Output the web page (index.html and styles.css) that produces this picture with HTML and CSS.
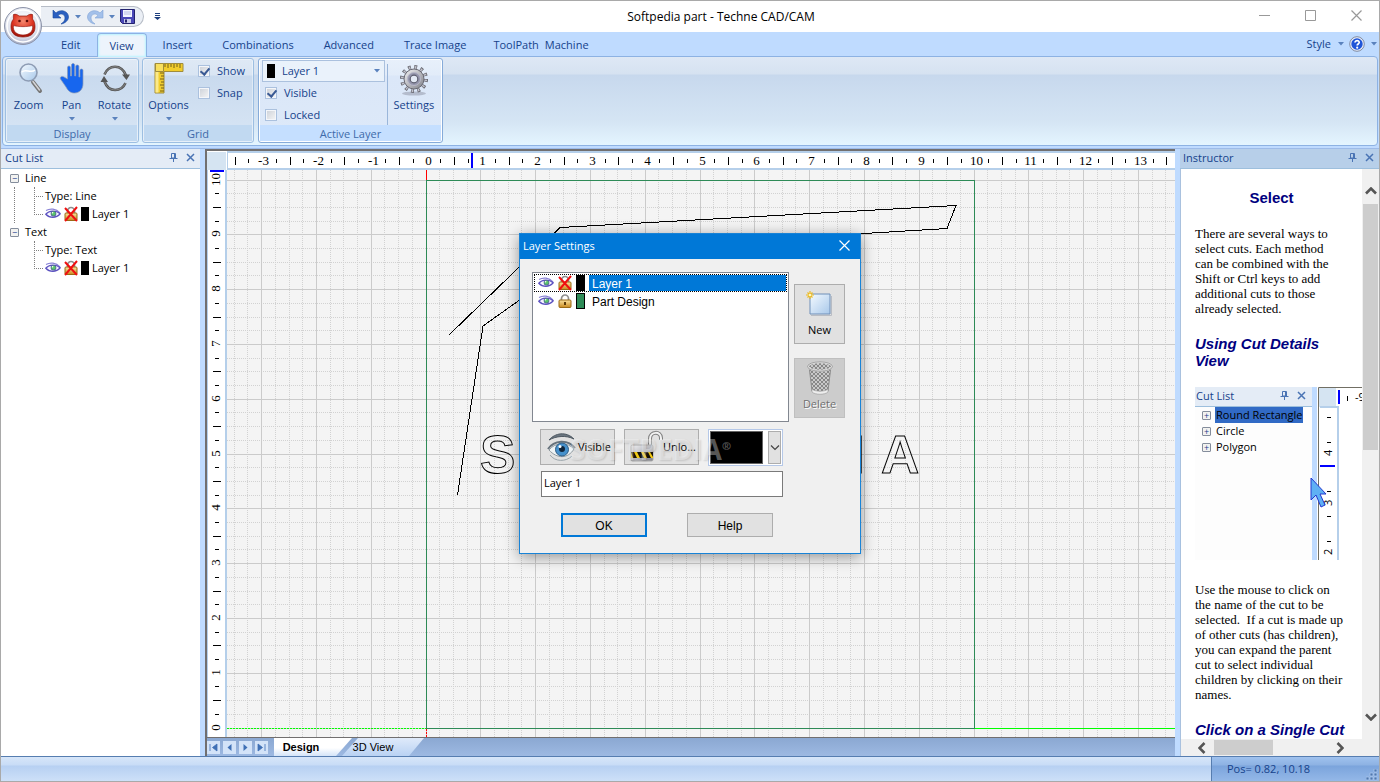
FILE: index.html
```html
<!DOCTYPE html>
<html lang="en">
<head>
    <meta charset="UTF-8">
    <meta name="viewport" content="width=device-width, initial-scale=1.0">
    <title>Softpedia part - Techne CAD/CAM</title>
    <link rel="stylesheet" href="styles.css">
</head>
<body>
    <!-- shared icons -->
    <svg class="defs" width="0" height="0" aria-hidden="true">
        <defs>
            <linearGradient id="gold" x1="0" y1="0" x2="0" y2="1">
                <stop offset="0" stop-color="#fbe3a0"/>
                <stop offset="1" stop-color="#c98a1e"/>
            </linearGradient>
            <linearGradient id="steel" x1="0" y1="0" x2="1" y2="1">
                <stop offset="0" stop-color="#f4f4f6"/>
                <stop offset="1" stop-color="#7f8088"/>
            </linearGradient>
            <linearGradient id="glass" x1="0" y1="0" x2="1" y2="1">
                <stop offset="0" stop-color="#f4faff"/>
                <stop offset="1" stop-color="#a8c8ea"/>
            </linearGradient>
            <radialGradient id="orb" cx="50%" cy="35%" r="65%">
                <stop offset="0" stop-color="#ffffff"/>
                <stop offset="0.7" stop-color="#dfe3ee"/>
                <stop offset="1" stop-color="#a4abc4"/>
            </radialGradient>
            <radialGradient id="red" cx="50%" cy="30%" r="70%">
                <stop offset="0" stop-color="#f58a70"/>
                <stop offset="0.6" stop-color="#dc3320"/>
                <stop offset="1" stop-color="#a01208"/>
            </radialGradient>
            <pattern id="mesh" width="4" height="4" patternUnits="userSpaceOnUse">
                <rect width="4" height="4" fill="#c9c9c9"/>
                <path d="M0 0l4 4M4 0l-4 4" stroke="#808080" stroke-width="0.9"/>
            </pattern>
            <symbol id="eye" viewBox="0 0 16 12">
                <path d="M1 2.500C5 .2 11 .4 15 5" fill="none" stroke="#8a83d6" stroke-width="1.200"/>
                <path d="M.8 6.200C4 2.400 11 2 15.200 5.800 11 10.600 4.500 10.200 .8 6.200z" fill="#f6f5ff" stroke="#5a50c0" stroke-width="1.300"/>
                <circle cx="8.500" cy="5.800" r="2.800" fill="#50589a"/>
                <circle cx="8.500" cy="5.600" r="2.200" fill="#59c46a"/>
                <circle cx="7.600" cy="4.800" r=".8" fill="#fff"/>
            </symbol>
            <symbol id="lock" viewBox="0 0 14 14">
                <path d="M3.500 7V4.500a3.500 3.500 0 0 1 7 0V7" fill="none" stroke="#8f8f8f" stroke-width="1.700"/>
                <rect x="1" y="6" width="12" height="7.500" rx="1" fill="url(#gold)" stroke="#9a6a16"/>
                <path d="M6 8h2v3h-2z" fill="#5a3a08"/>
            </symbol>
            <symbol id="unlock" viewBox="0 0 14 16">
                <path d="M3.500 7V5a3.500 3.500 0 0 1 7 0V7" fill="none" stroke="#8f8f8f" stroke-width="1.700"/>
                <rect x="1" y="7" width="12" height="7.500" rx="1" fill="url(#gold)" stroke="#9a6a16"/>
                <path d="M1 2l12 13M13 1L1 15" stroke="#f01010" stroke-width="2"/>
            </symbol>
            <symbol id="pin" viewBox="0 0 9 9">
                <path d="M2.500 .5h4v4.500h-4zM5.500 .5v4.500M.5 5.500h8M4.500 5.500V9" fill="none" stroke="#4a74b4"/>
            </symbol>
            <symbol id="cross" viewBox="0 0 9 9">
                <path d="M1 1l7 7M8 1L1 8" stroke="#4a74b4" stroke-width="1.500"/>
            </symbol>
            <symbol id="down" viewBox="0 0 6 4">
                <path d="M0 0h6L3 3.500z" fill="#5a82bd"/>
            </symbol>
            <symbol id="chevron" viewBox="0 0 12 8">
                <path d="M1 6.500L6 1.500l5 5" fill="none" stroke="#555" stroke-width="2.600"/>
            </symbol>
        </defs>
    </svg>

    <header class="titlebar">
        <div class="quick-bar">
            <button class="quick" aria-label="Undo">
                <svg width="18" height="16" viewBox="0 0 18 16"><path d="M1 1v8h8L6 6.500c3-3 7-1 7 2.500 0 3-2 4.500-4 6 4-.6 7.500-3.500 7.500-7C16.500 2 8.500-.5 4 4z" fill="#2a5fc0" stroke="#194a9e" stroke-width=".6"/></svg>
            </button>
            <svg class="down" width="6" height="4"><use href="#down"/></svg>
            <button class="quick" aria-label="Redo">
                <svg width="18" height="16" viewBox="0 0 18 16"><path d="M17 1v8H9l3-2.500c-3-3-7-1-7 2.500 0 3 2 4.500 4 6-4-.6-7.500-3.500-7.500-7C1.500 2 9.500-.5 14 4z" fill="#a3c0ea" stroke="#7fa3d6" stroke-width=".6"/></svg>
            </button>
            <svg class="down" width="6" height="4"><use href="#down"/></svg>
            <button class="quick" aria-label="Save">
                <svg width="15" height="15" viewBox="0 0 15 15"><path d="M.5 .5h14v14H2.500l-2-2z" fill="#4a48b8" stroke="#24226e"/><path d="M3 1h9v7H3z" fill="#f3f5ff"/><path d="M4 3h7M4 5h7" stroke="#b5bce4"/><path d="M4 10h7v4H4z" fill="#c9cdea"/><path d="M5 10.500h2v3H5z" fill="#24226e"/></svg>
            </button>
        </div>
        <button class="quick" aria-label="Customize">
            <svg width="7" height="7" viewBox="0 0 7 7"><path d="M1 0h5v1H1zM1 2h5v1H1zM0 4h7L3.500 7z" fill="#1e3f7e"/></svg>
        </button>
        <h1 class="title">Softpedia part - Techne CAD/CAM</h1>
        <div class="window-buttons">
            <button aria-label="Minimize"><svg width="11" height="11"><path d="M0 5.500h11" stroke="#999"/></svg></button>
            <button aria-label="Maximize"><svg width="11" height="11"><path d="M.5 .5h10v10H.5z" fill="none" stroke="#999"/></svg></button>
            <button aria-label="Close"><svg width="11" height="11"><path d="M.5 .5l10 10M10.500 .5l-10 10" stroke="#999" stroke-width="1.200"/></svg></button>
        </div>
        <button class="orb" aria-label="Application menu">
            <svg width="40" height="40" viewBox="0 0 40 40">
                <circle cx="20" cy="20" r="18.500" fill="url(#orb)" stroke="#8c93a8"/>
                <circle cx="20" cy="20" r="16" fill="none" stroke="#fff" stroke-width="1.500"/>
                <path d="M10.500 8.500c2-.5 4 0 5.500 1.500h8c1.500-1.500 3.500-2 5.500-1.500 0 2 .3 3 0 4.500 2 2 2.500 5 2.500 8 0 7-5 10-12 10S8 28 8 21c0-3 .5-6 2.500-8-.3-1.500 0-2.500 0-4.500z" fill="url(#red)" stroke="#8e1a10" stroke-width=".7"/>
                <path d="M10.500 19.500c4 1.500 15 1.500 19 0 1 6-3.500 9.500-9.500 9.500s-10.500-3.500-9.500-9.500z" fill="#fff" stroke="#8e1a10" stroke-width=".6"/>
                <circle cx="16.500" cy="15" r="1.300" fill="#5e0c06"/><circle cx="24" cy="15" r="1.300" fill="#5e0c06"/>
            </svg>
        </button>
    </header>

    <nav class="tabs">
        <button class="tab">Edit</button>
        <button class="tab active">View</button>
        <button class="tab">Insert</button>
        <button class="tab">Combinations</button>
        <button class="tab">Advanced</button>
        <button class="tab">Trace Image</button>
        <button class="tab narrow">ToolPath</button>
        <button class="tab narrow">Machine</button>
        <div class="tabs-right">
            <button class="style-menu">Style <svg width="6" height="4"><use href="#down"/></svg></button>
            <button class="help-menu" aria-label="Help">
                <svg width="16" height="16" viewBox="0 0 16 16"><circle cx="8" cy="8" r="7.300" fill="#e8eefb" stroke="#808aa0"/><circle cx="8" cy="8" r="5.700" fill="#1f55d8"/><path d="M6 6.500C6 4 10.300 4 10.200 6.500 10.100 8 8.200 8 8.200 9.500" fill="none" stroke="#fff" stroke-width="1.700"/><circle cx="8.200" cy="11.700" r="1.100" fill="#fff"/></svg>
                <svg width="6" height="4"><use href="#down"/></svg>
            </button>
        </div>
    </nav>

    <section class="ribbon">
        <div class="group">
            <div class="group-body">
                <button class="tool">
                    <svg width="32" height="32" viewBox="0 0 32 32"><path d="M20 20l7 9" stroke="#777" stroke-width="4" stroke-linecap="round"/><path d="M20 19.500l6.500 8.500" stroke="#d5d5d8" stroke-width="1.500" stroke-linecap="round"/><circle cx="15.500" cy="10.500" r="8.500" fill="url(#glass)" stroke="#8d9cb4" stroke-width="1.600"/><path d="M9 10c3-4 9 2 13-2" fill="none" stroke="#fff" stroke-width="1.500"/></svg>
                    <span>Zoom</span>
                </button>
                <button class="tool">
                    <svg width="32" height="32" viewBox="0 0 32 32"><path d="M11.500 17V5.500c0-2 3-2 3 0V14h1V3c0-2 3.200-2 3.200 0v11h1V4.500c0-2 3.200-2 3.200 0V15h1V8.500c0-2 3.100-2 3.100 0V22c0 5-3.500 9-8.500 9-4.500 0-6.500-2.500-8.500-6l-5.500-8c-1-2 1.500-3.500 3.500-2z" fill="#1766ee" stroke="#8c9bb5" stroke-width=".7"/></svg>
                    <span>Pan</span>
                    <svg width="6" height="4"><use href="#down"/></svg>
                </button>
                <button class="tool">
                    <svg width="32" height="32" viewBox="0 0 32 32"><path d="M5.500 12.500c4-10 17-11 21.500 1M26.500 21c-4 9-17 10-21-1.500" fill="none" stroke="#555" stroke-width="2.600"/><path d="M5.500 12.500c4-10 17-11 21.500 1M26.500 21c-4 9-17 10-21-1.500" fill="none" stroke="#aaa" stroke-width=".6"/><path d="M23 12.500h8l-3.500 5.500zM1.500 20h7.500l-4-6z" fill="#555"/></svg>
                    <span>Rotate</span>
                    <svg width="6" height="4"><use href="#down"/></svg>
                </button>
            </div>
            <div class="caption">Display</div>
        </div>
        <div class="group">
            <div class="group-body">
                <button class="tool wide">
                    <svg width="32" height="32" viewBox="0 0 32 32"><path d="M2 1.500h28v8H11V31H2z" fill="#f2cd2c" stroke="#a08c3c"/><path d="M2.500 10v20.500h3V10z" fill="#fbe98a"/><path d="M12 2v3M15 2v4M18 2v3M21 2v4M24 2v3M27 2v4M7 11h4M8 14h3M7 17h4M8 20h3M7 23h4M8 26h3M7 29h4" stroke="#75601a"/><path d="M2.500 1.500h8v8h-8z" fill="#f8df5e" stroke="#a08c3c"/></svg>
                    <span>Options</span>
                    <svg width="6" height="4"><use href="#down"/></svg>
                </button>
                <div class="checks">
                    <label class="check"><input type="checkbox" checked>Show</label>
                    <label class="check"><input type="checkbox">Snap</label>
                </div>
            </div>
            <div class="caption">Grid</div>
        </div>
        <div class="group hot">
            <div class="group-body">
                <div class="layer-box">
                    <div class="combo">
                        <span class="swatch"></span>
                        <select aria-label="Active layer"><option>Layer 1</option><option>Part Design</option></select>
                        <svg width="6" height="4"><use href="#down"/></svg>
                    </div>
                    <label class="check"><input type="checkbox" checked>Visible</label>
                    <label class="check"><input type="checkbox">Locked</label>
                </div>
                <button class="tool settings">
                    <svg width="32" height="32" viewBox="0 0 32 32"><ellipse cx="16" cy="29.500" rx="12" ry="2" fill="#b4bccd"/><circle cx="16" cy="15" r="12" fill="none" stroke="#66666e" stroke-width="4" stroke-dasharray="2.800 3.480"/><circle cx="16" cy="15" r="11.700" fill="none" stroke="#c4c4ce" stroke-width="2.800" stroke-dasharray="1.400 4.726" stroke-dashoffset="-.7"/><circle cx="16" cy="15" r="10" fill="url(#steel)" stroke="#686872"/><circle cx="16" cy="15" r="6.500" fill="#9495ac" stroke="#b8b8c8"/><circle cx="16" cy="15" r="3.800" fill="#e4eaf5" stroke="#5e5f70" stroke-width="1.200"/></svg>
                    <span>Settings</span>
                </button>
            </div>
            <div class="caption">Active Layer</div>
        </div>
    </section>

    <main class="workspace">
        <aside class="panel cut-list">
            <div class="panel-head">
                <h2>Cut List</h2>
                <button aria-label="Pin"><svg width="9" height="9"><use href="#pin"/></svg></button>
                <button aria-label="Close"><svg width="9" height="9"><use href="#cross"/></svg></button>
            </div>
            <ul class="tree">
                <li>
                    <div class="node"><span class="toggle">−</span>Line</div>
                    <ul>
                        <li>Type: Line</li>
                        <li><svg width="16" height="12"><use href="#eye"/></svg><svg width="14" height="16"><use href="#unlock"/></svg><span class="swatch"></span>Layer 1</li>
                    </ul>
                </li>
                <li>
                    <div class="node"><span class="toggle">−</span>Text</div>
                    <ul>
                        <li>Type: Text</li>
                        <li><svg width="16" height="12"><use href="#eye"/></svg><svg width="14" height="16"><use href="#unlock"/></svg><span class="swatch"></span>Layer 1</li>
                    </ul>
                </li>
            </ul>
        </aside>

        <section class="editor">
            <div class="sheet">
                <div class="corner"></div>
                <svg class="ruler-top" id="rulerTop"></svg>
                <svg class="ruler-left" id="rulerLeft"></svg>
                <svg class="drawing" id="drawing">
                    <g id="grid"></g>
                    <path class="axis-x dotted" d="M0 558.500H199"/>
                    <path class="axis-x" d="M748 558.500H3000"/>
                    <path class="axis-y" d="M199.500 0V10"/>
                    <path class="axis-y dotted" d="M199.500 559V3000"/>
                    <rect class="part" x="199.500" y="10.500" width="548" height="548"/>
                    <polyline class="cut" points="222,165 333,57.500 729,35.500 720,58.500 363,80 256,156 230.500,325"/>
                    <text class="cut-text" y="303" x="253 308 363 408 453 505 560 623 654">SOFTPEDIA</text>
                </svg>
            </div>
            <div class="sheet-tabs">
                <button class="nav" aria-label="First"><svg width="9" height="9"><path d="M1 1v7M8 1v7L3.500 4.500z" stroke="#3f70b5" fill="#3f70b5" stroke-width=".8"/></svg></button>
                <button class="nav" aria-label="Previous"><svg width="9" height="9"><path d="M6.500 1v7L2.500 4.500z" fill="#3f70b5"/></svg></button>
                <button class="nav" aria-label="Next"><svg width="9" height="9"><path d="M2.500 1v7l4-3.500z" fill="#3f70b5"/></svg></button>
                <button class="nav" aria-label="Last"><svg width="9" height="9"><path d="M8 1v7M1 1v7l4.500-3.500z" stroke="#3f70b5" fill="#3f70b5" stroke-width=".8"/></svg></button>
                <button class="sheet-tab current">Design</button>
                <button class="sheet-tab">3D View</button>
            </div>
        </section>

        <aside class="panel instructor">
            <div class="panel-head">
                <h2>Instructor</h2>
                <button aria-label="Pin"><svg width="9" height="9"><use href="#pin"/></svg></button>
                <button aria-label="Close"><svg width="9" height="9"><use href="#cross"/></svg></button>
            </div>
            <div class="browser">
                <article class="lesson">
                    <h3 class="center">Select</h3>
                    <p>There are several ways to<br>select cuts. Each method<br>can be combined with the<br>Shift or Ctrl keys to add<br>additional cuts to those<br>already selected.</p>
                    <h3>Using Cut Details<br>View</h3>
                    <div class="figure">
                        <div class="fig-list">
                            <div class="fig-head">Cut List
                                <svg width="9" height="9"><use href="#pin"/></svg>
                                <svg width="9" height="9"><use href="#cross"/></svg>
                            </div>
                            <ul>
                                <li><span class="toggle">+</span><span class="picked">Round Rectangle</span></li>
                                <li><span class="toggle">+</span><span>Circle</span></li>
                                <li><span class="toggle">+</span><span>Polygon</span></li>
                            </ul>
                        </div>
                        <svg class="fig-ruler" width="51" height="173" viewBox="0 0 51 173">
                            <rect width="5" height="173" fill="#bfdbff"/>
                            <path d="M6.500 173V.5H51" fill="none" stroke="#716f64"/>
                            <path d="M7 1h17v19H7z" fill="#d5e4f2"/>
                            <path d="M8 20h18v153" fill="none" stroke="#b5cfea" stroke-width="2"/>
                            <path d="M27 3v14M8 79h15" stroke="#00f" stroke-width="2"/>
                            <path d="M35.500 9v5M15 30.500h4M15 55.500h4M15 104.500h4M15 129.500h4M15 154.500h4" stroke="#000"/>
                            <text x="43" y="14">-9</text>
                            <text transform="translate(20 69) rotate(-90)">4</text>
                            <text transform="translate(20 119) rotate(-90)">3</text>
                            <text transform="translate(20 168) rotate(-90)">2</text>
                        </svg>
                        <svg class="cursor" width="17" height="32" viewBox="0 0 17 32"><path d="M1 1v22l5-5 5 12 4-2-5-11h6z" fill="#5fb0f4" stroke="#2438d0"/></svg>
                    </div>
                    <p>Use the mouse to click on<br>the name of the cut to be<br>selected.&nbsp; If a cut is made up<br>of other cuts (has children),<br>you can expand the parent<br>cut to select individual<br>children by clicking on their<br>names.</p>
                    <h3>Click on a Single Cut</h3>
                </article>
                <div class="scroll-v">
                    <svg width="12" height="8"><use href="#chevron"/></svg>
                    <span class="thumb"></span>
                    <svg class="flip" width="12" height="8"><use href="#chevron"/></svg>
                </div>
                <div class="scroll-h">
                    <svg class="left" width="12" height="8"><use href="#chevron"/></svg>
                    <span class="thumb"></span>
                    <svg class="right" width="12" height="8"><use href="#chevron"/></svg>
                </div>
            </div>
        </aside>
    </main>

    <footer class="status">
        <div class="pos">Pos= 0.82, 10.18</div>
        <svg class="grip" width="12" height="12"><path d="M8 0h3v3H8zM4 4h3v3H4zM8 4h3v3H8zM0 8h3v3H0zM4 8h3v3H4zM8 8h3v3H8z" fill="#4f78b0" stroke="#a8c4ea" stroke-width=".8"/></svg>
    </footer>

    <div class="dialog" role="dialog" aria-labelledby="dialogTitle">
        <div class="dialog-title">
            <h2 id="dialogTitle">Layer Settings</h2>
            <button aria-label="Close"><svg width="11" height="11"><path d="M.5 .5l10 10M10.500 .5l-10 10" stroke="#fff" stroke-width="1.200"/></svg></button>
        </div>
        <div class="dialog-body">
            <ul class="layers" role="listbox" aria-label="Layers">
                <li class="selected" role="option" aria-selected="true"><svg width="16" height="12"><use href="#eye"/></svg><svg width="14" height="16"><use href="#unlock"/></svg><span class="swatch"></span><span class="name">Layer 1</span></li>
                <li role="option" aria-selected="false"><svg width="16" height="12"><use href="#eye"/></svg><svg width="14" height="14"><use href="#lock"/></svg><span class="swatch green"></span><span class="name">Part Design</span></li>
            </ul>
            <div class="side-buttons">
                <button class="btn tall">
                    <svg width="32" height="32" viewBox="0 0 32 32"><path d="M6 4h20v20H6z" fill="url(#glass)" stroke="#6f8fb8"/><path d="M7 25.500h20.500V6" fill="none" stroke="#b8bcc4"/><path d="M6 1v8M2 5h8M3.500 2.500l5 5M8.500 2.500l-5 5" stroke="#eebb20" stroke-width="1.200"/><circle cx="6" cy="5" r="1.300" fill="#fff6c0"/></svg>
                    New
                </button>
                <button class="btn tall" disabled>
                    <svg width="32" height="36" viewBox="0 0 32 36"><path d="M5 6l3 25c2 3 14 3 16 0l3-25z" fill="url(#mesh)" stroke="#8c8c8c"/><path d="M8 29c3 3 13 3 16 0v3c-3 3-13 3-16 0z" fill="#eee" stroke="#999" stroke-width=".6"/><ellipse cx="16" cy="6.500" rx="12" ry="4.200" fill="url(#mesh)" stroke="#dcdcdc" stroke-width="2"/><ellipse cx="16" cy="6.500" rx="12.500" ry="4.700" fill="none" stroke="#888" stroke-width=".7"/></svg>
                    Delete
                </button>
            </div>
            <div class="layer-edit">
                <div class="layer-flags">
                    <button class="btn flag">
                        <svg width="32" height="32" viewBox="0 0 32 32"><path d="M3 9C9 2 20 0 28 8 20 4 10 5 3 9z" fill="#6b7680" stroke="#4f5962"/><path d="M2 18C8 9 22 8 29 17" fill="none" stroke="#66727c" stroke-width="2"/><path d="M3 19C9 11 22 11 28 18 22 28 11 28 3 19z" fill="#eef3f5" stroke="#8e999f"/><circle cx="16" cy="18.500" r="6.500" fill="#4691cc" stroke="#2c5c86"/><circle cx="16" cy="18" r="3" fill="#10263c"/><circle cx="14" cy="15.500" r="1.500" fill="#fff"/><path d="M4 24c5 7 16 7 22 1" fill="none" stroke="#9ba5ab"/></svg>
                        Visible
                    </button>
                    <button class="btn flag">
                        <svg width="33" height="34" viewBox="0 0 33 34"><path d="M20 16V9c0-8 11-8 11-1v2" fill="none" stroke="#7f7f7f" stroke-width="4"/><path d="M20 16V9c0-8 11-8 11-1v2" fill="none" stroke="#f2f2f2" stroke-width="2"/><rect x="1" y="15" width="22" height="16" rx="1.500" fill="url(#steel)" stroke="#aaa"/><path d="M1 22h22v6H1z" fill="#f2c914"/><path d="M1 22h3l3 6H3zM7 22h4l3 6h-4zM14 22h4l3 6h-4zM20 22h3v5z" fill="#15120a"/></svg>
                        Unlo...
                    </button>
                    <div class="color-pick">
                        <span class="color"></span>
                        <div class="color-drop">
                            <select aria-label="Layer color"></select>
                            <svg width="10" height="6"><path d="M1 .5l4 4 4-4" fill="none" stroke="#444" stroke-width="1.200"/></svg>
                        </div>
                    </div>
                </div>
                <input class="layer-name" type="text" aria-label="Layer name" value="Layer 1">
            </div>
        </div>
        <div class="dialog-actions">
            <button class="btn primary">OK</button>
            <button class="btn">Help</button>
        </div>
        <div class="watermark" aria-hidden="true">SOFTPEDIA<sup>®</sup></div>
    </div>

    <script src="script.js"></script>
</body>
</html>
```

FILE: styles.css
```css
* {
    box-sizing: border-box;
}
body {
    margin: 0;
    height: 100vh;
    display: flex;
    flex-direction: column;
    position: relative;
    overflow: hidden;
    border: 1px solid #a9a9a9;
    background: #bfdbff;
    font-family: "Open Sans", "Noto Sans", sans-serif;
    font-size: 11px;
    line-height: 16px;
    color: #000;
}
button, select, input {
    font: inherit;
    color: inherit;
}
button {
    padding: 0;
    border: 0;
    background: none;
}
h1, h2, h3, p, ul {
    margin: 0;
    padding: 0;
    font-weight: normal;
    font-size: inherit;
    list-style: none;
}
svg {
    display: block;
    flex: none;
}
.defs {
    position: absolute;
}

/* title bar */
.titlebar {
    position: relative;
    display: flex;
    align-items: center;
    height: 31px;
    flex: none;
    padding-left: 40px;
    background: #fff;
}
.quick-bar {
    display: flex;
    align-items: center;
    gap: 5px;
    height: 21px;
    padding: 0 8px 0 11px;
    margin-right: 10px;
    border: 1px solid #b6bcc6;
    border-radius: 0 11px 11px 0;
    border-left: 0;
    background: #ebeff5;
}
.quick {
    display: flex;
}
.title {
    flex: 1;
    text-align: center;
    font-size: 12px;
    padding-left: 22px;
}
.window-buttons {
    display: flex;
    gap: 35px;
    padding-right: 17px;
    margin-bottom: 2px;
}
.orb {
    position: absolute;
    left: 2px;
    top: 5px;
}

/* ribbon tabs */
.tabs {
    display: flex;
    height: 24px;
    flex: none;
    padding: 1px 2px 0 46px;
    color: #15428b;
}
.tab {
    padding: 0 13px;
    border: 1px solid transparent;
    border-bottom: 0;
    margin-right: 2px;
}
.tab.active {
    padding: 0 12px;
    border-color: #8db2e3;
    border-radius: 4px 4px 0 0;
    background: #edf4fc;
    box-shadow: inset 0 0 2px 1px #b9f3ff;
    margin-bottom: -1px;
    z-index: 1;
}
.tab.narrow {
    padding: 0 2px;
    margin-right: 0;
}
.tab:nth-child(7) {
    margin-left: 8px;
}
.tabs-right {
    display: flex;
    align-items: center;
    gap: 5px;
    margin-left: auto;
    padding-bottom: 2px;
}
.style-menu, .help-menu {
    display: flex;
    align-items: center;
    gap: 7px;
}
.help-menu {
    gap: 6px;
}

/* ribbon */
.ribbon {
    display: flex;
    gap: 3px;
    flex: none;
    height: 90px;
    margin: 0 1px 2px 1px;
    padding: 1px 2px 2px;
    border: 1px solid #8db2e3;
    border-radius: 4px;
    background: linear-gradient(#dee8f5 0, #d6e2f1 17px, #c7d8ed 18px, #d5e5f4 65px, #e4f5ff 100%);
    color: #15428b;
}
.group {
    display: flex;
    flex-direction: column;
    border: 1px solid #9dbfe2;
    border-radius: 3px;
    background: linear-gradient(#dfe9f5 0, #d9e5f3 16px, #c9daee 17px, #d8e6f5 100%);
    box-shadow: inset 0 0 0 1px rgba(255, 255, 255, 0.4);
}
.group.hot {
    margin-left: 1px;
    background: linear-gradient(#e8f0fb 0, #e2ecf9 16px, #dbe7f8 17px, #dde9f9 100%);
    border-color: #86abd9;
    box-shadow: inset 0 0 0 1px #fff;
}
.group-body {
    display: flex;
    flex: 1;
    padding: 0 2px;
}
.group:first-child .group-body {
    padding-left: 1px;
}
.caption {
    height: 16px;
    margin: 0 1px 1px;
    line-height: 17px;
    text-align: center;
    color: #3e6aaa;
    background: #c1d9f1;
}
.hot .caption {
    background: #c5dfff;
}
.tool {
    display: flex;
    flex-direction: column;
    align-items: center;
    width: 43px;
    padding-top: 3px;
}
.tool span {
    margin: 3px 0 4px;
}
.tool.wide {
    width: 47px;
}
.checks, .layer-box {
    display: flex;
    flex-direction: column;
    gap: 6px;
}
.checks {
    padding: 4px 6px 0 6px;
}
.check {
    display: flex;
    align-items: center;
    gap: 7px;
    height: 16px;
}
.check input {
    appearance: none;
    position: relative;
    width: 12px;
    height: 12px;
    margin: 0;
    border: 1px solid #abc1de;
    background: linear-gradient(135deg, #cbd0d8, #f6f6f6);
    box-shadow: inset 0 0 0 1px #f4f6fa;
}
.check input:checked::after {
    content: "";
    position: absolute;
    left: 3px;
    top: 0;
    width: 4px;
    height: 7px;
    border: solid #3a5a94;
    border-width: 0 2px 2px 0;
    transform: rotate(40deg);
}
.layer-box {
    padding: 1px 0 0 1px;
}
.layer-box .check {
    padding-left: 3px;
}
.layer-box .combo + .check {
    margin-top: -3px;
}
.combo {
    display: flex;
    align-items: center;
    width: 123px;
    height: 22px;
    padding: 0 4px;
    border: 1px solid #abc1de;
    background: #eaf2fb;
}
.combo select {
    appearance: none;
    flex: 1;
    padding: 0 0 0 7px;
    border: 0;
    background: none;
}
.swatch {
    width: 8px;
    height: 14px;
    flex: none;
    border: 1px solid #000;
    background: #000;
}
.swatch.green {
    background: #2e8b57;
}
.tool.settings {
    width: 53px;
    margin: 5px 0 0 2px;
    padding-top: 0;
    border-left: 1px solid #9ab6da;
}
.settings span {
    margin-top: 1px;
}

/* panels */
.workspace {
    display: flex;
    flex: 1;
    min-height: 0;
    gap: 5px;
    border-top: 1px solid #9dbbe8;
}
.panel {
    display: flex;
    flex-direction: column;
    background: #fff;
    flex: none;
    width: 199px;
}
.panel-head {
    display: flex;
    align-items: center;
    gap: 8px;
    height: 20px;
    flex: none;
    padding: 0 5px 2px 4px;
    border-bottom: 1px solid #9dbfdd;
    background: #e4ecf6;
    color: #15428b;
}
.panel-head h2 {
    flex: 1;
}
.instructor .panel-head {
    padding-left: 3px;
    background: #b7cfe9;
}
.tree {
    padding-left: 9px;
}
.tree .node {
    display: flex;
    align-items: center;
    gap: 6px;
    height: 18px;
}
.tree ul {
    margin-left: 4px;
    padding-left: 19px;
    border-left: 1px dotted #808080;
}
.tree > li:last-child ul {
    border-color: transparent;
}
.tree ul li {
    position: relative;
    display: flex;
    align-items: center;
    gap: 3px;
    height: 18px;
    padding-left: 11px;
}
.tree ul li::before {
    content: "";
    position: absolute;
    left: 0;
    top: -9px;
    width: 8px;
    height: 18px;
    border: dotted #808080;
    border-width: 0 0 1px 1px;
}
.tree ul li:first-child::before {
    top: 0;
    height: 9px;
}
.toggle {
    width: 9px;
    height: 9px;
    flex: none;
    border: 1px solid #848d9c;
    border-radius: 1px;
    background: #f2f2f0;
    font-size: 9px;
    line-height: 7px;
    text-align: center;
    color: #1a3c8c;
}

/* editor */
.editor {
    display: flex;
    flex-direction: column;
    flex: 1;
    min-width: 0;
    border-left: 2px solid #716f6f;
    border-top: 2px solid #716f6f;
}
.sheet {
    display: grid;
    grid-template-columns: 20px 1fr;
    grid-template-rows: 19px 1fr;
    flex: 1;
    min-height: 0;
    background: #fff;
}
.corner {
    margin: 1px 1px 0 0;
    background: #d5e4f2;
}
.ruler-top, .ruler-left, .drawing {
    width: 100%;
    height: 100%;
}
.ruler-top {
    border: solid #b5cfea;
    border-width: 2px 0 2px 1px;
}
.ruler-left {
    border: solid #b5cfea;
    border-width: 0 2px 0 1px;
}
.ruler-top text, .ruler-left text {
    font-family: "Liberation Serif", serif;
    font-size: 13px;
    text-anchor: middle;
}
.tick {
    stroke: #000;
}
.marker {
    stroke: #00f;
    stroke-width: 2;
}
.drawing {
    background: #f4f4f4;
}
.minor {
    stroke: #d2d2d2;
    stroke-dasharray: 1 1;
}
.major {
    stroke: #cbcbcb;
}
.axis-x {
    stroke: #00ff00;
}
.axis-y {
    stroke: #ff0000;
}
.dotted {
    stroke-dasharray: 2 1;
}
.part {
    fill: none;
    stroke: #2e8b57;
}
.cut, .cut-text {
    fill: none;
    stroke: #000;
    shape-rendering: crispEdges;
}
.cut-text {
    font: bold 53px "Liberation Sans", Arial, sans-serif;
}
.sheet-tabs {
    display: flex;
    align-items: center;
    gap: 3px;
    height: 19px;
    flex: none;
    border-top: 1px solid #716f6f;
    background: linear-gradient(#8ba8d2, #9db9e2);
    font: 11px "Liberation Sans", Arial, sans-serif;
}
.nav {
    display: flex;
    align-items: center;
    justify-content: center;
    width: 13px;
    height: 13px;
    background: #d3e3f8;
}
.sheet-tab {
    height: 18px;
    width: 82px;
    padding-right: 20px;
    background: linear-gradient(#dfeafa, #b9d2f3);
    clip-path: polygon(16px 0, 100% 0, 67px 100%, 0 100%);
}
.sheet-tab.current {
    width: 78px;
    margin: 0 -13px 0 3px;
    padding-right: 24px;
    background: linear-gradient(#fff 55%, #d4e4f8);
    font-weight: bold;
    clip-path: polygon(0 0, 100% 0, 62px 100%, 0 100%);
}

/* instructor */
.browser {
    display: grid;
    grid-template-columns: minmax(0, 1fr) 17px;
    grid-template-rows: minmax(0, 1fr) 17px;
    flex: 1;
    min-height: 0;
    background: #f0f0f0;
    border-left: 1px solid #a9c1de;
}
.lesson {
    overflow: hidden;
    padding: 20px 0 0 14px;
    background: #fff;
    font: 13px/15px "Liberation Serif", "Times New Roman", serif;
}
.lesson h3 {
    margin: 19px 0 18px;
    font: italic bold 15px/17px "Liberation Sans", Arial, sans-serif;
    color: #00007f;
}
.lesson h3.center {
    margin: 0 0 20px;
    padding-right: 14px;
    text-align: center;
    font-style: normal;
}
.figure {
    position: relative;
    display: flex;
    height: 173px;
    margin-bottom: 22px;
    font: 11px/16px "Open Sans", sans-serif;
}
.fig-list {
    width: 117px;
    flex: none;
    background: #fdfdfd;
}
.fig-head {
    display: flex;
    align-items: center;
    gap: 8px;
    height: 20px;
    padding: 0 6px 2px 1px;
    border-bottom: 1px solid #9dbfdd;
    background: #e4ecf6;
    color: #15428b;
}
.fig-head svg:first-of-type {
    margin-left: auto;
}
.fig-list li {
    display: flex;
    align-items: center;
    gap: 4px;
    padding-left: 7px;
    white-space: nowrap;
}
.fig-list li span:last-child {
    padding: 0 1px;
}
.picked {
    background: #316ac5;
}
.fig-ruler text {
    font: 11px "Open Sans", sans-serif;
}
.cursor {
    position: absolute;
    left: 115px;
    top: 90px;
}
.scroll-v, .scroll-h {
    display: flex;
    align-items: center;
}
.scroll-v {
    flex-direction: column;
    padding: 18px 0;
}
.scroll-h {
    padding: 0 16px 0 15px;
}
.thumb {
    background: #cdcdcd;
}
.scroll-v .thumb {
    width: 15px;
    height: 246px;
    margin: 9px 0 auto;
}
.scroll-h .thumb {
    width: 59px;
    height: 15px;
    margin: 0 auto 0 6px;
}
.flip {
    transform: rotate(180deg);
}
.left {
    transform: rotate(-90deg);
}
.right {
    transform: rotate(90deg);
}

/* status bar */
.status {
    display: flex;
    height: 25px;
    flex: none;
    border-top: 1px solid #567db0;
    background: linear-gradient(#d7e6f9 0, #c8dcf6 8px, #b7d0f2 9px, #cde0f8 100%);
    color: #15428b;
}
.pos {
    width: 168px;
    margin-left: auto;
    padding: 4px 15px;
    border-left: 1px solid #567db0;
    background: linear-gradient(#a0c2ee 0, #8db2e3 8px, #7ba4dc 9px, #94b8e8 100%);
}
.grip {
    position: absolute;
    right: 1px;
    bottom: 0;
}

/* layer settings dialog */
.dialog {
    position: absolute;
    left: 50%;
    top: 232px;
    width: 342px;
    margin-left: -171px;
    padding-bottom: 16px;
    border: 1px solid #1883d7;
    background: #f0f0f0;
    box-shadow: 0 3px 14px rgba(0, 0, 0, 0.4);
}
.dialog-title {
    display: flex;
    align-items: center;
    height: 25px;
    padding: 0 10px 2px 3px;
    background: #0078d7;
    color: #fff;
}
.dialog-title h2 {
    flex: 1;
}
.dialog-body {
    display: grid;
    grid-template-columns: 257px 52px;
    gap: 7px 5px;
    padding: 13px 12px 16px;
}
.layers {
    height: 150px;
    padding: 1px;
    border: 1px solid #828790;
    background: #fff;
    font: 12px/18px "Liberation Sans", Arial, sans-serif;
}
.layers li {
    display: flex;
    align-items: center;
    gap: 4px;
    height: 18px;
    padding: 0 1px 0 4px;
}
.layers .selected {
    outline: 1px dotted #000;
    outline-offset: -1px;
}
.layers .swatch {
    width: 9px;
    height: 16px;
}
.layers .name {
    flex: 1;
    height: 16px;
    line-height: 18px;
    padding-left: 3px;
}
.selected .name {
    background: #0078d7;
    color: #fff;
}
.side-buttons {
    display: flex;
    flex-direction: column;
    gap: 14px;
    padding-top: 12px;
}
.btn {
    border: 1px solid #adadad;
    background: #e1e1e1;
}
.btn.tall {
    display: flex;
    flex-direction: column;
    align-items: center;
    justify-content: flex-end;
    width: 51px;
    height: 60px;
    padding-bottom: 5px;
}
.btn:disabled {
    border-color: #bfbfbf;
    background: #ccc;
    color: #707070;
    text-shadow: 1px 1px #fff;
}
.layer-edit {
    display: flex;
    flex-direction: column;
    gap: 5px;
    padding: 0 6px 0 8px;
}
.layer-flags {
    display: flex;
    gap: 9px;
}
.flag {
    display: flex;
    align-items: center;
    width: 75px;
    height: 36px;
    padding-left: 5px;
    white-space: nowrap;
}
.color-pick {
    display: flex;
    gap: 5px;
    width: 75px;
    height: 37px;
    padding: 1px;
    border: 1px solid #b5c8e8;
    background: #fff;
}
.color {
    flex: 1;
    border: 1px solid #646464;
    background: #000;
}
.color-drop {
    position: relative;
    display: flex;
    align-items: center;
    justify-content: center;
    width: 13px;
    border: 1px solid #adadad;
    background: #e1e1e1;
}
.color-drop select {
    appearance: none;
    position: absolute;
    inset: 0;
    width: 100%;
    border: 0;
    background: none;
}
.layer-name {
    width: 242px;
    height: 26px;
    margin-left: 1px;
    padding: 0 2px 3px;
    border: 1px solid #7a7a7a;
    background: #fff;
}
.dialog-actions {
    display: flex;
    gap: 40px;
    padding-left: 41px;
}
.dialog-actions .btn {
    width: 86px;
    height: 24px;
    padding-top: 1px;
    font: 12px "Liberation Sans", Arial, sans-serif;
}
.btn.primary {
    border: 2px solid #0078d7;
}
.watermark {
    position: absolute;
    left: 50px;
    top: 196px;
    font: bold 28px/38px "Open Sans", sans-serif;
    color: rgba(255, 255, 255, 0.35);
    text-shadow: 1px 1px 2px rgba(0, 0, 0, 0.12);
    pointer-events: none;
}
.watermark sup {
    font-size: 11px;
    line-height: 11px;
}
```

FILE: script.js
```js
// one unit on the part is 54.8 screen pixels
const UNIT = 54.8;
const ORIGIN_X = 199;
const ORIGIN_TOP = 10;
const TOP_VALUE = 10;

function line(x1, y1, x2, y2, cls) {
    return `<path class="${cls}" d="M${x1} ${y1}L${x2} ${y2}"/>`;
}

function draw() {
    const drawing = document.getElementById('drawing');
    const w = drawing.clientWidth;
    const h = drawing.clientHeight;
    let minor = '', major = '', top = '', left = '';

    // columns and top ruler
    for (let q = -14; ORIGIN_X + q * UNIT / 4 < w; q++) {
        const x = Math.floor(ORIGIN_X + q * UNIT / 4) + 0.5;
        if (q % 4 === 0) {
            major += line(x, 0, x, h, 'major');
            top += `<text x="${x + 1}" y="12">${q / 4}</text>`;
        } else {
            minor += line(x, 0, x, h, 'minor');
            const len = q % 2 === 0 ? 4 : 2;
            top += line(x, 8 - len, x, 8 + len, 'tick');
        }
    }

    // rows and left ruler
    for (let q = 0; ORIGIN_TOP + q * UNIT / 4 < h; q++) {
        const y = Math.floor(ORIGIN_TOP + q * UNIT / 4) + 0.5;
        if (q % 4 === 0) {
            major += line(0, y, w, y, 'major');
            left += `<text transform="translate(12 ${y - 1}) rotate(-90)">${TOP_VALUE - q / 4}</text>`;
        } else {
            minor += line(0, y, w, y, 'minor');
            const len = q % 2 === 0 ? 4 : 2;
            left += line(9 - len, y, 9 + len, y, 'tick');
        }
    }

    document.getElementById('grid').innerHTML = minor + major;
    document.getElementById('rulerTop').innerHTML = top + line(244, 0, 244, 15, 'marker');
    document.getElementById('rulerLeft').innerHTML = left + line(2, 1, 16, 1, 'marker');
}

window.addEventListener('resize', draw);
draw();
```
